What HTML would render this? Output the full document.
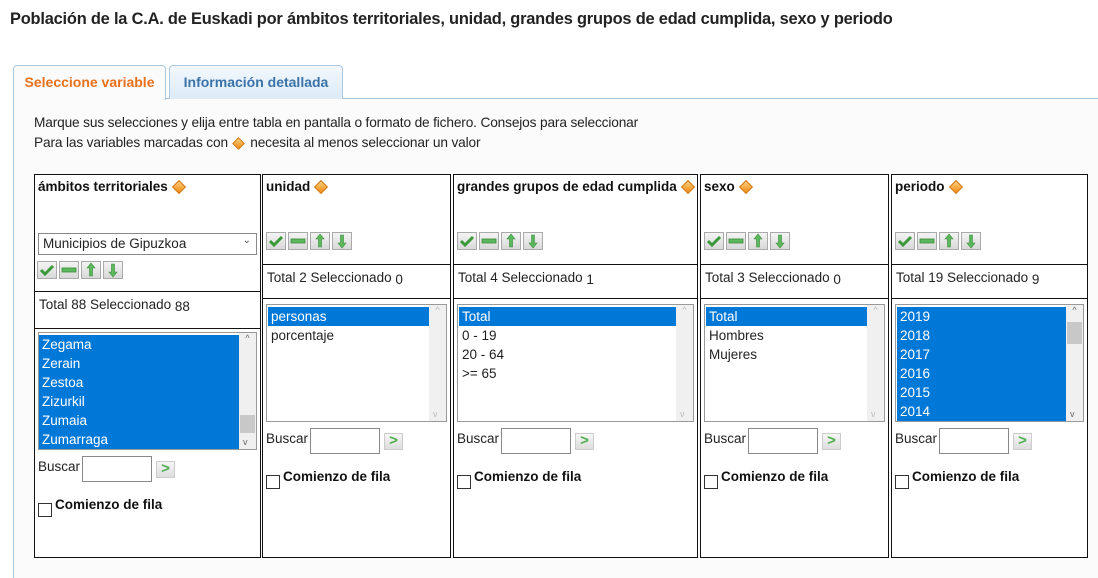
<!DOCTYPE html>
<html><head><meta charset="utf-8"><style>
*{box-sizing:border-box;margin:0;padding:0}
body{width:1098px;height:569px;background:#fff;font-family:"Liberation Sans","DejaVu Sans",sans-serif;font-size:13px;color:#222;position:relative;overflow:hidden}
.abs{position:absolute}
h1{position:absolute;left:10px;top:10px;font-size:16.4px;font-weight:bold;color:#222;white-space:nowrap;letter-spacing:-0.2px}
.panel{position:absolute;left:13px;top:98px;width:1090px;height:480px;background:#fbfbfb;border-left:1px solid #aac8e0;border-top:1px solid #aac8e0}
.tab{position:absolute;top:65px;height:34px;border:1px solid #aac8e0;border-bottom:none;border-radius:4px 4px 0 0;font-weight:bold;font-size:14px;padding-top:8px;text-align:center}
.col{position:absolute;top:174px;height:384px;border:1.5px solid #111;background:#fff}
.hl{position:absolute;left:0;right:0;border-top:1.5px solid #111}
.ttl{position:absolute;left:3px;top:4px;font-weight:bold;font-size:13.5px;white-space:nowrap;color:#111}
.dia{display:inline-block;width:10px;height:10px;background:linear-gradient(135deg,#ffd080,#f08a10);border:1px solid #d07000;transform:rotate(45deg);margin-left:6px;vertical-align:-1px}
.btns{position:absolute;display:flex;gap:2px}
.b{width:20px;height:18px;border:1px solid #aaa;background:linear-gradient(#f4f4f4,#d8d8d8);display:flex;align-items:center;justify-content:center}
.stat{position:absolute;left:4px;font-size:13.5px;white-space:nowrap}
.lb{position:absolute;border:1px solid #999;background:#fff;overflow:hidden}
.lb div{height:19px;line-height:19px;padding-left:3px;font-size:13.5px;white-space:nowrap}
.sel{background:#0078d7;color:#fff}
.sb{position:absolute;right:0;top:0;bottom:0;width:17px;background:#f0f0f0;font-size:9px;color:#666;text-align:center}
.bus{position:absolute;left:3px;font-size:13.5px}
.inp{position:absolute;width:70px;height:26px;border:1px solid #888;background:#fff}
.go{position:absolute;width:19px;height:17px;border:1px solid #ccc;background:linear-gradient(#f6f6f6,#ddd);color:#4cae4c;font-weight:bold;font-size:15px;line-height:14px;text-align:center}
.cb{position:absolute;left:3px;width:14px;height:14px;border:1px solid #333;background:#fff}
.cbl{position:absolute;left:20px;font-weight:bold;font-size:13.5px;white-space:nowrap;color:#111}
</style></head><body>
<h1>Población de la C.A. de Euskadi por ámbitos territoriales, unidad, grandes grupos de edad cumplida, sexo y periodo</h1>
<div class="panel"></div>
<div class="tab" style="left:13px;width:153px;background:#fbfbfb;color:#e8701a;height:35px">Seleccione variable</div>
<div class="tab" style="left:169px;width:174px;background:linear-gradient(#f2f8fd,#dcebf8);color:#3b72a8">Información detallada</div>
<div class="abs" style="left:34px;top:115px;font-size:13.7px;white-space:nowrap;letter-spacing:-0.15px">Marque sus selecciones y elija entre tabla en pantalla o formato de fichero. Consejos para seleccionar</div>
<div class="abs" style="left:34px;top:135px;font-size:13.7px;white-space:nowrap;letter-spacing:-0.15px">Para las variables marcadas con <span class="dia" style="margin:0 4px 0 2px;width:9px;height:9px"></span> necesita al menos seleccionar un valor</div>

<svg width="0" height="0" style="position:absolute">
<defs>
<g id="ck"><path d="M2 7 L6 11 L14 3" stroke="#3a9a3a" stroke-width="3" fill="none"/></g>
<g id="mn"><rect x="1" y="5" width="14" height="4" fill="#5cb85c" stroke="#3a8a3a" stroke-width=".8"/></g>
<g id="up"><path d="M8 1 L4 6 H6.5 V14 H9.5 V6 H12 Z" fill="#5cb85c" stroke="#3a8a3a" stroke-width=".6"/></g>
<g id="dn"><path d="M8 15 L4 10 H6.5 V2 H9.5 V10 H12 Z" fill="#5cb85c" stroke="#3a8a3a" stroke-width=".6"/></g>
</defs></svg>

<div class="col" style="left:34px;width:227px">
 <div class="ttl">ámbitos territoriales<span class="dia"></span></div>
 <div class="abs" style="left:3px;top:58px;width:219px;height:22px;border:1px solid #888;background:#fff;padding:2px 4px;font-size:13.5px">Municipios de Gipuzkoa<span style="position:absolute;right:5px;top:1px;font-size:10px;color:#555">&#8964;</span></div>
 <div class="btns" style="left:2px;top:86px"><span class="b"><svg width="16" height="14"><use href="#ck"/></svg></span><span class="b"><svg width="16" height="14"><use href="#mn"/></svg></span><span class="b"><svg width="16" height="16"><use href="#up"/></svg></span><span class="b"><svg width="16" height="16"><use href="#dn"/></svg></span></div>
 <div class="hl" style="top:116px"></div>
 <div class="stat" style="top:122px">Total 88 Seleccionado <span style="vertical-align:-2px">88</span></div>
 <div class="hl" style="top:153px"></div>
 <div class="lb" style="left:3px;top:157px;width:219px;height:118px;padding-top:2px">
  <div class="sel">Zegama</div><div class="sel">Zerain</div><div class="sel">Zestoa</div><div class="sel">Zizurkil</div><div class="sel">Zumaia</div><div class="sel">Zumarraga</div>
  <span class="sb">^<span style="position:absolute;left:1px;top:82px;width:15px;height:18px;background:#c8c8c8"></span><span style="position:absolute;left:4px;bottom:2px">v</span></span>
 </div>
 <div class="bus" style="top:284px">Buscar</div><div class="inp" style="left:47px;top:281px"></div><div class="go" style="left:121px;top:286px">&gt;</div>
 <div class="cb" style="top:328px"></div><div class="cbl" style="top:322px">Comienzo de fila</div>
</div>

<div class="col" style="left:262px;width:189px">
 <div class="ttl">unidad<span class="dia"></span></div>
 <div class="btns" style="left:3px;top:57px"><span class="b"><svg width="16" height="14"><use href="#ck"/></svg></span><span class="b"><svg width="16" height="14"><use href="#mn"/></svg></span><span class="b"><svg width="16" height="16"><use href="#up"/></svg></span><span class="b"><svg width="16" height="16"><use href="#dn"/></svg></span></div>
 <div class="hl" style="top:89px"></div>
 <div class="stat" style="top:95px">Total 2 Seleccionado <span style="vertical-align:-2px">0</span></div>
 <div class="hl" style="top:123px"></div>
 <div class="lb" style="left:3px;top:129px;width:181px;height:118px;padding:2px 0 0 1px">
  <div class="sel" style="margin-right:16px">personas</div><div>porcentaje</div>
  <span class="sb" style="color:#bbb">^<span style="position:absolute;left:4px;bottom:2px">v</span></span>
 </div>
 <div class="bus" style="top:256px">Buscar</div><div class="inp" style="left:47px;top:253px"></div><div class="go" style="left:121px;top:258px">&gt;</div>
 <div class="cb" style="top:300px"></div><div class="cbl" style="top:294px">Comienzo de fila</div>
</div>

<div class="col" style="left:453px;width:245px">
 <div class="ttl">grandes grupos de edad cumplida<span class="dia"></span></div>
 <div class="btns" style="left:3px;top:57px"><span class="b"><svg width="16" height="14"><use href="#ck"/></svg></span><span class="b"><svg width="16" height="14"><use href="#mn"/></svg></span><span class="b"><svg width="16" height="16"><use href="#up"/></svg></span><span class="b"><svg width="16" height="16"><use href="#dn"/></svg></span></div>
 <div class="hl" style="top:89px"></div>
 <div class="stat" style="top:95px">Total 4 Seleccionado <span style="vertical-align:-2px">1</span></div>
 <div class="hl" style="top:123px"></div>
 <div class="lb" style="left:3px;top:129px;width:237px;height:118px;padding:2px 0 0 1px">
  <div class="sel" style="margin-right:16px">Total</div><div>0 - 19</div><div>20 - 64</div><div>&gt;= 65</div>
  <span class="sb" style="color:#bbb">^<span style="position:absolute;left:4px;bottom:2px">v</span></span>
 </div>
 <div class="bus" style="top:256px">Buscar</div><div class="inp" style="left:47px;top:253px"></div><div class="go" style="left:121px;top:258px">&gt;</div>
 <div class="cb" style="top:300px"></div><div class="cbl" style="top:294px">Comienzo de fila</div>
</div>

<div class="col" style="left:700px;width:189px">
 <div class="ttl">sexo<span class="dia"></span></div>
 <div class="btns" style="left:3px;top:57px"><span class="b"><svg width="16" height="14"><use href="#ck"/></svg></span><span class="b"><svg width="16" height="14"><use href="#mn"/></svg></span><span class="b"><svg width="16" height="16"><use href="#up"/></svg></span><span class="b"><svg width="16" height="16"><use href="#dn"/></svg></span></div>
 <div class="hl" style="top:89px"></div>
 <div class="stat" style="top:95px">Total 3 Seleccionado <span style="vertical-align:-2px">0</span></div>
 <div class="hl" style="top:123px"></div>
 <div class="lb" style="left:3px;top:129px;width:181px;height:118px;padding:2px 0 0 1px">
  <div class="sel" style="margin-right:16px">Total</div><div>Hombres</div><div>Mujeres</div>
  <span class="sb" style="color:#bbb">^<span style="position:absolute;left:4px;bottom:2px">v</span></span>
 </div>
 <div class="bus" style="top:256px">Buscar</div><div class="inp" style="left:47px;top:253px"></div><div class="go" style="left:121px;top:258px">&gt;</div>
 <div class="cb" style="top:300px"></div><div class="cbl" style="top:294px">Comienzo de fila</div>
</div>

<div class="col" style="left:891px;width:197px">
 <div class="ttl">periodo<span class="dia"></span></div>
 <div class="btns" style="left:3px;top:57px"><span class="b"><svg width="16" height="14"><use href="#ck"/></svg></span><span class="b"><svg width="16" height="14"><use href="#mn"/></svg></span><span class="b"><svg width="16" height="16"><use href="#up"/></svg></span><span class="b"><svg width="16" height="16"><use href="#dn"/></svg></span></div>
 <div class="hl" style="top:89px"></div>
 <div class="stat" style="top:95px">Total 19 Seleccionado <span style="vertical-align:-2px">9</span></div>
 <div class="hl" style="top:123px"></div>
 <div class="lb" style="left:3px;top:129px;width:189px;height:118px;padding:2px 0 0 1px">
  <div class="sel">2019</div><div class="sel">2018</div><div class="sel">2017</div><div class="sel">2016</div><div class="sel">2015</div><div class="sel">2014</div>
  <span class="sb">^<span style="position:absolute;left:1px;top:17px;width:15px;height:22px;background:#c8c8c8"></span><span style="position:absolute;left:4px;bottom:2px">v</span></span>
 </div>
 <div class="bus" style="top:256px">Buscar</div><div class="inp" style="left:47px;top:253px"></div><div class="go" style="left:121px;top:258px">&gt;</div>
 <div class="cb" style="top:300px"></div><div class="cbl" style="top:294px">Comienzo de fila</div>
</div>
</body></html>
